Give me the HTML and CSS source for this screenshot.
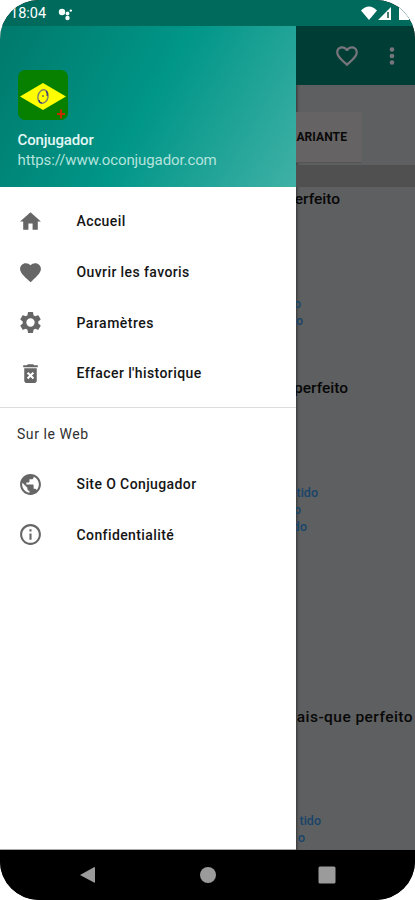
FILE: index.html
```html
<!DOCTYPE html>
<html lang="fr">
<head>
<meta charset="utf-8">
<title>Conjugador</title>
<link rel="stylesheet" href="styles.css">
</head>
<body>
<div class="phone">
  <header class="status">
    <span class="time">18:04</span>
    <svg class="notif" viewBox="0 0 16 14"><circle cx="4" cy="4" r="3.2"/><circle cx="9.500" cy="5.500" r="1.900"/><circle cx="9.500" cy="10" r="2.200"/><circle cx="12.800" cy="2.600" r="1.200"/></svg>
    <svg class="signals" viewBox="0 0 54 18"><path d="M0 5.500Q8-2.500 16 5.500L8 15ZM17 15L30 2V15Z"/><path class="gap" d="M26 7h2v6h-2z"/><path d="M38 3h3V1h4v2h3v12H38z"/></svg>
  </header>
  <div class="main">
    <aside class="drawer">
      <div class="profile">
        <svg class="logo" viewBox="0 0 50 50"><rect width="50" height="50" rx="7" fill="#078000"/><path d="M2 26.500L25 13L48 26.500L25 40Z" fill="#ff0"/><ellipse cx="25" cy="26.500" rx="5" ry="6.800" transform="rotate(14 25 26.500)" fill="none" stroke="#7d806c" stroke-width="1.400"/><path d="M21 30q0 3 3 3M24 26h2M28 21q2 2 1 5" fill="none" stroke="#343477" stroke-width="1.200"/><path d="M43 39.500v9M39 44h8" stroke="#c62a00" stroke-width="2"/></svg>
        <div class="name">Conjugador</div>
        <div class="url">https://www.oconjugador.com</div>
      </div>
      <nav class="menu">
        <div class="item"><svg viewBox="0 0 24 24"><path d="M10 20v-6h4v6h5v-8h3L12 3 2 12h3v8z"/></svg><span>Accueil</span></div>
        <div class="item"><svg viewBox="0 0 24 24"><path d="M12 21.350l-1.450-1.320C5.400 15.360 2 12.280 2 8.500 2 5.420 4.420 3 7.500 3c1.740 0 3.410.810 4.500 2.090C13.090 3.810 14.760 3 16.500 3 19.580 3 22 5.420 22 8.500c0 3.780-3.400 6.860-8.550 11.540z"/></svg><span>Ouvrir les favoris</span></div>
        <div class="item"><svg viewBox="0 0 24 24"><path d="M19.430 12.980c.040-.320.070-.640.070-.980s-.030-.660-.070-.980l2.110-1.650c.190-.150.240-.420.120-.640l-2-3.460c-.120-.220-.390-.300-.610-.220l-2.490 1c-.520-.400-1.080-.730-1.690-.980l-.380-2.650C14.460 2.180 14.250 2 14 2h-4c-.250 0-.460.180-.490.420l-.380 2.650c-.610.250-1.170.590-1.690.980l-2.490-1c-.230-.090-.490 0-.610.220l-2 3.460c-.130.220-.070.490.120.640l2.110 1.650c-.040.320-.070.650-.070.980s.030.660.070.980l-2.110 1.650c-.190.150-.240.420-.120.640l2 3.460c.120.220.390.300.610.220l2.490-1c.520.400 1.080.730 1.690.980l.380 2.650c.030.240.240.420.490.420h4c.250 0 .460-.180.490-.420l.380-2.650c.610-.250 1.170-.590 1.690-.980l2.490 1c.230.090.490 0 .610-.220l2-3.460c.120-.220.070-.490-.120-.640zM12 16a4 4 0 1 1 0-8 4 4 0 0 1 0 8z"/></svg><span class="wide">Paramètres</span></div>
        <div class="item"><svg viewBox="0 0 24 24"><path fill-rule="evenodd" d="M6 19c0 1.100.900 2 2 2h8c1.100 0 2-.900 2-2V7H6zM8.460 11.880l1.410-1.410L12 12.590l2.120-2.120 1.410 1.410L13.410 14l2.120 2.120-1.410 1.410L12 15.410l-2.120 2.120-1.410-1.410L10.590 14zM15.500 4l-1-1h-5l-1 1H5v2h14V4z"/></svg><span>Effacer l'historique</span></div>
      </nav>
      <nav class="menu web">
        <div class="heading">Sur le Web</div>
        <div class="item"><svg viewBox="0 0 24 24"><path d="M12 2C6.480 2 2 6.480 2 12s4.480 10 10 10 10-4.480 10-10S17.520 2 12 2zm-1 17.930c-3.950-.490-7-3.850-7-7.930 0-.620.080-1.210.210-1.790L9 15v1c0 1.100.900 2 2 2zm6.900-2.540c-.260-.810-1-1.390-1.900-1.390h-1v-3c0-.550-.450-1-1-1H8v-2h2c.550 0 1-.450 1-1V7h2c1.100 0 2-.900 2-2v-.410c2.930 1.190 5 4.060 5 7.410 0 2.080-.800 3.970-2.100 5.390z"/></svg><span>Site O Conjugador</span></div>
        <div class="item"><svg viewBox="0 0 24 24"><path d="M11 17h2v-6h-2v6zm1-15C6.480 2 2 6.480 2 12s4.480 10 10 10 10-4.480 10-10S17.520 2 12 2zm0 18c-4.410 0-8-3.590-8-8s3.590-8 8-8 8 3.590 8 8-3.590 8-8 8zM11 9h2V7h-2v2z"/></svg><span>Confidentialité</span></div>
      </nav>
    </aside>
    <main class="page">
      <div class="toolbar">
        <svg class="fav" viewBox="0 0 24 24"><path d="M16.500 3c-1.740 0-3.410.810-4.500 2.090C10.910 3.810 9.240 3 7.500 3 4.420 3 2 5.420 2 8.500c0 3.780 3.400 6.860 8.550 11.540L12 21.350l1.450-1.320C18.600 15.360 22 12.280 22 8.500 22 5.420 19.580 3 16.500 3zm-4.400 15.550l-.100.100-.100-.100C7.140 14.240 4 11.390 4 8.500 4 6.500 5.500 5 7.500 5c1.540 0 3.040.990 3.570 2.360h1.870C13.460 5.990 14.960 5 16.500 5c2 0 3.500 1.500 3.500 3.500 0 2.890-3.140 5.740-7.900 10.050z"/></svg>
        <svg class="more" viewBox="0 0 24 24"><circle cx="12" cy="5.500" r="2.300"/><circle cx="12" cy="12" r="2.300"/><circle cx="12" cy="18.500" r="2.300"/></svg>
      </div>
      <div class="actions"><div class="button">ARIANTE</div></div>
      <div class="strip"></div>
      <section class="tense first"><h2 class="w44">erfeito</h2><p class="w5">o</p><p class="w7">o</p></section>
      <section class="tense second"><h2 class="w52">perfeito</h2><p class="w22">tido</p><p class="w5">o</p><p class="w11">do</p></section>
      <section class="tense third"><h2 class="w117">ais-que perfeito</h2><p class="w25">tido</p><p class="w9">o</p></section>
    </main>
  </div>
  <footer class="navbar">
    <svg viewBox="0 0 18 18"><path d="M1 9L15 1.200Q16 .800 16 2V16Q16 17 15 16.600Z"/></svg>
    <svg viewBox="0 0 18 18"><circle cx="9" cy="9" r="8"/></svg>
    <svg viewBox="0 0 18 18"><rect x=".500" y=".500" width="17" height="17" rx="1.500"/></svg>
  </footer>
</div>
</body>
</html>
```

FILE: styles.css
```css
* { box-sizing: border-box; }
body { margin: 0; background: #fff; font-family: Roboto, "Liberation Sans", sans-serif; }
svg { display: block; flex: none; }
.phone { width: 415px; height: 900px; display: flex; flex-direction: column; overflow: hidden; border-radius: 39px; background: #000; }
.status { height: 26px; flex: none; display: flex; align-items: flex-start; padding: 5px 0 0 10px; background: #006b5d; color: #fff; }
.time { width: 48px; font-size: 14.5px; line-height: 18px; }
.notif { width: 16px; height: 14px; margin-top: 3px; fill: #f4fffc; }
.signals { width: 54px; height: 18px; margin-left: auto; fill: #fff; }
.signals .gap { fill: #50776e; }
.main { height: 824px; flex: none; display: flex; }
.drawer { width: 296px; flex: none; background: #fff; border-bottom: 1px solid #aaa; }
.profile { height: 161px; padding: 44px 0 0 17.5px; background: linear-gradient(120deg, #00796b 0%, #009688 50%, #4db6ac 110%); }
.logo { width: 50px; height: 50px; }
.name { margin-top: 10px; font-size: 15px; line-height: 20px; font-weight: 500; color: #e4f7f4; letter-spacing: -.15px; }
.url { font-size: 15px; line-height: 20px; color: #b5e3dd; letter-spacing: -.1px; }
.menu { padding-top: 9px; }
.item { height: 50.7px; display: flex; align-items: center; padding-left: 17.5px; color: #151515; font-size: 14px; font-weight: 500; }
.item svg { width: 25px; height: 25px; margin-right: 34px; fill: #666; }
.item span { white-space: nowrap; letter-spacing: .4px; }
.item .wide { letter-spacing: .5px; }
.web { height: 300px; margin-top: 8px; padding-top: 1px; border-top: 1px solid #dcdcdc; }
.heading { height: 50px; padding-left: 17px; font-size: 14px; line-height: 50px; color: #303030; letter-spacing: .55px; }
.page { flex: 1; min-width: 0; background: #5e5f60; box-shadow: inset 3px 0 3px -2px #333; overflow: hidden; }
.toolbar { height: 59px; display: flex; align-items: center; padding-left: 38px; background: #003e35; fill: #76757b; }
.fav { width: 26px; height: 26px; }
.more { width: 24px; height: 24px; margin-left: 20px; }
.actions { height: 80px; padding-top: 27px; }
.button { width: 66px; height: 50px; display: flex; justify-content: flex-end; padding-right: 15px; background: #656363; box-shadow: 0 1px 1px #555; font-size: 12px; line-height: 50px; font-weight: 700; color: #090909; letter-spacing: .1px; }
.strip { height: 22px; background: #505050; }
.tense { color: #174469; font-size: 12.5px; font-weight: 500; line-height: 17px; }
.tense h2, .tense p { margin: 0; display: flex; justify-content: flex-end; overflow: hidden; white-space: nowrap; }
.tense h2 { height: 25px; font-size: 15.5px; line-height: 25px; font-weight: 500; color: #080808; }
.first { height: 189px; }
.first h2, .second h2 { margin-bottom: 83px; }
.second { height: 329px; }
.third h2 { margin-bottom: 82px; letter-spacing: .45px; }
.w44 { width: 44px; }
.w52 { width: 52px; }
.w117 { width: 117px; }
.w5 { width: 5px; }
.w7 { width: 7px; }
.w9 { width: 9px; }
.w11 { width: 11px; }
.w22 { width: 22px; }
.w25 { width: 25px; }
.navbar { height: 50px; flex: none; display: flex; align-items: center; justify-content: space-between; padding: 0 79px; background: #000; fill: #9b9b9b; }
.navbar svg { width: 18px; height: 18px; }
```
